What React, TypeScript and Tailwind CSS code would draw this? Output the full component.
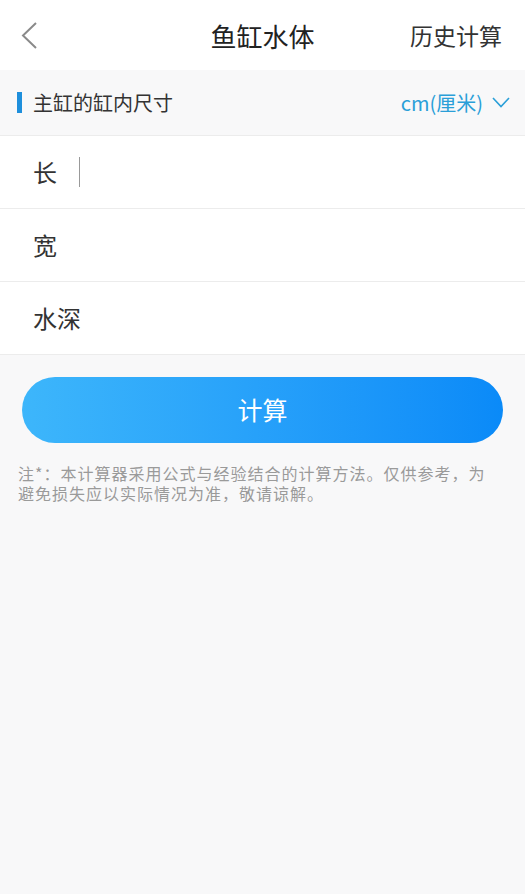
import React from "react";

const font = { fontFamily: '"Noto Sans CJK SC", "Noto Sans", sans-serif' };

function Row({ label, cursor }: { label: string; cursor?: boolean }) {
  return (
    <div className="flex h-[73px] items-center border-b border-[#ececec] bg-white pl-[33px]">
      <span className="text-[24px] leading-none text-[#333]">{label}</span>
      {cursor && <span className="ml-[22px] h-[30px] w-px bg-[#999]" />}
    </div>
  );
}

export default function App() {
  return (
    <div className="min-h-[894px] bg-[#f8f8f9]" style={font}>
      {/* header */}
      <div className="relative flex h-[70px] items-center bg-white">
        <svg className="absolute left-[19px] top-[21px]" width="20" height="29" viewBox="0 0 20 29">
          <path d="M17 2 L4 14.5 L17 27" fill="none" stroke="#8a8a8a" strokeWidth="2" />
        </svg>
        <h1 className="w-full text-center text-[26px] font-normal text-[#222]">鱼缸水体</h1>
        <span className="absolute right-[23px] top-[18px] text-[23px] text-[#333]">历史计算</span>
      </div>

      {/* section title */}
      <div className="flex h-[66px] items-center justify-between border-b border-[#ececec] pr-[15px]">
        <div className="flex items-center">
          <span className="ml-[17px] h-[21px] w-[5px] bg-[#1e8fdc]" />
          <span className="ml-[11px] text-[20px] text-[#333]">主缸的缸内尺寸</span>
        </div>
        <div className="flex items-center text-[20px] text-[#2a9fd8]">
          <span>cm(厘米)</span>
          <svg className="ml-[9px]" width="18" height="11" viewBox="0 0 18 11">
            <path d="M1 1 L9 9.5 L17 1" fill="none" stroke="#2a9fd8" strokeWidth="1.6" />
          </svg>
        </div>
      </div>

      {/* inputs */}
      <div>
        <Row label="长" cursor />
        <Row label="宽" />
        <Row label="水深" />
      </div>

      {/* button */}
      <div className="px-[22px] pt-[22px]">
        <button className="flex h-[66px] w-full items-center justify-center rounded-full bg-gradient-to-r from-[#3db6fb] to-[#0a8af8] text-[25px] text-white">
          计算
        </button>
      </div>

      <p className="pl-[18px] pr-[28px] pt-[20px] text-[16px] leading-[20px] tracking-[1px] text-[#9a9a9a]">
        注*：本计算器采用公式与经验结合的计算方法。仅供参考，为避免损失应以实际情况为准，敬请谅解。
      </p>
    </div>
  );
}
